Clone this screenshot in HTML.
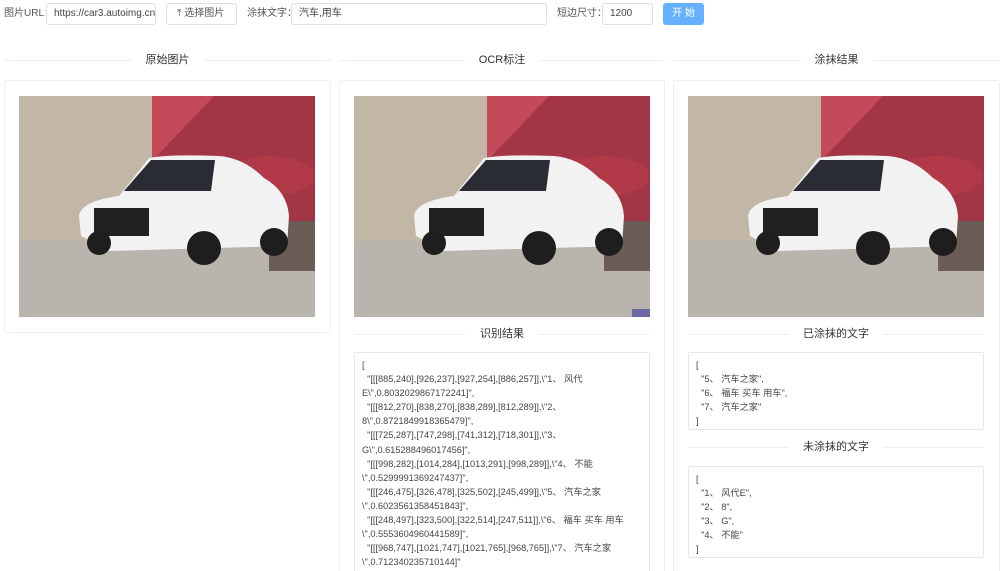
<!DOCTYPE html>
<html><head><meta charset="utf-8"><style>
*{box-sizing:border-box;margin:0;padding:0}
html,body{width:1000px;height:571px;overflow:hidden}
body{background:#fff;font-family:"Liberation Sans","Noto Sans CJK SC",sans-serif;color:#333;font-size:10px;position:relative}
.a{position:absolute}
.inp{position:absolute;border:1px solid #dcdfe6;border-radius:3px;height:22px;top:3px;line-height:20px;padding-left:7px;font-size:10px;color:#444;background:#fff}
.lbl{position:absolute;top:3px;line-height:22px;font-size:10px;color:#555}
.div{position:absolute;height:14px;}
.div:before{content:"";position:absolute;left:0;right:0;top:7px;border-top:1px solid #ebeef5}
.div span{position:absolute;left:50%;transform:translateX(-50%);background:#fff;padding:0 14px;font-size:11px;color:#333;line-height:14px;white-space:nowrap}
.card{position:absolute;border:1px solid #ebeef5;border-radius:3px;background:#fff}
.box{position:absolute;border:1px solid #e4e7ed;border-radius:2px;padding:5px 7px;font-size:9.2px;line-height:14.1px;color:#444;white-space:pre;overflow:hidden}
.img{position:absolute;width:296px;height:221px}
</style></head><body>
<div class="lbl" style="left:4px">图片URL：</div>
<div class="inp" style="left:46px;width:110px">https://car3.autoimg.cn</div>
<div class="inp" style="left:166px;width:71px;padding-left:10px;color:#555">⤒ 选择图片</div>
<div class="lbl" style="left:247px">涂抹文字：</div>
<div class="inp" style="left:291px;width:256px">汽车,用车</div>
<div class="lbl" style="left:557px">短边尺寸：</div>
<div class="inp" style="left:602px;width:51px">1200</div>
<div class="a" style="left:663px;top:3px;width:41px;height:22px;background:#66b1ff;border-radius:3px;color:#fff;text-align:center;line-height:22px;font-size:10px">开 始</div>

<div class="div" style="left:4px;top:53px;width:327px"><span>原始图片</span></div>
<div class="div" style="left:339px;top:53px;width:326px"><span>OCR标注</span></div>
<div class="div" style="left:673px;top:53px;width:327px"><span>涂抹结果</span></div>

<div class="card" style="left:4px;top:80px;width:327px;height:253px"></div>
<div class="card" style="left:339px;top:80px;width:326px;height:500px"></div>
<div class="card" style="left:673px;top:80px;width:327px;height:500px"></div>

<svg class="img" style="left:19px;top:96px" viewBox="0 0 296 221"><rect width="296" height="221" fill="#b9b5ae"/><rect width="133" height="145" fill="#c2b6a6"/><polygon points="133,0 296,0 296,125 133,125" fill="#a33646"/><polygon points="133,0 195,0 133,65" fill="#c44a5a"/><rect x="250" y="125" width="46" height="50" fill="#6b5c56"/><ellipse cx="250" cy="80" rx="45" ry="20" fill="#b23a48"/><path d="M62 140 L60 120 Q62 105 100 100 L130 62 Q150 58 200 60 Q225 62 245 82 Q268 95 270 120 L268 150 L90 155 Z" fill="#f2f2f2"/><polygon points="105,95 132,64 196,64 192,95" fill="#2a2c33"/><rect x="75" y="112" width="55" height="28" fill="#222"/><circle cx="185" cy="152" r="17" fill="#1e1e1e"/><circle cx="255" cy="146" r="14" fill="#1e1e1e"/><circle cx="80" cy="147" r="12" fill="#1e1e1e"/></svg>
<svg class="img" style="left:354px;top:96px" viewBox="0 0 296 221"><rect width="296" height="221" fill="#b9b5ae"/><rect width="133" height="145" fill="#c2b6a6"/><polygon points="133,0 296,0 296,125 133,125" fill="#a33646"/><polygon points="133,0 195,0 133,65" fill="#c44a5a"/><rect x="250" y="125" width="46" height="50" fill="#6b5c56"/><ellipse cx="250" cy="80" rx="45" ry="20" fill="#b23a48"/><path d="M62 140 L60 120 Q62 105 100 100 L130 62 Q150 58 200 60 Q225 62 245 82 Q268 95 270 120 L268 150 L90 155 Z" fill="#f2f2f2"/><polygon points="105,95 132,64 196,64 192,95" fill="#2a2c33"/><rect x="75" y="112" width="55" height="28" fill="#222"/><circle cx="185" cy="152" r="17" fill="#1e1e1e"/><circle cx="255" cy="146" r="14" fill="#1e1e1e"/><circle cx="80" cy="147" r="12" fill="#1e1e1e"/><rect x="278" y="213" width="18" height="8" fill="#6a6aa0"/></svg>
<svg class="img" style="left:688px;top:96px" viewBox="0 0 296 221"><rect width="296" height="221" fill="#b9b5ae"/><rect width="133" height="145" fill="#c2b6a6"/><polygon points="133,0 296,0 296,125 133,125" fill="#a33646"/><polygon points="133,0 195,0 133,65" fill="#c44a5a"/><rect x="250" y="125" width="46" height="50" fill="#6b5c56"/><ellipse cx="250" cy="80" rx="45" ry="20" fill="#b23a48"/><path d="M62 140 L60 120 Q62 105 100 100 L130 62 Q150 58 200 60 Q225 62 245 82 Q268 95 270 120 L268 150 L90 155 Z" fill="#f2f2f2"/><polygon points="105,95 132,64 196,64 192,95" fill="#2a2c33"/><rect x="75" y="112" width="55" height="28" fill="#222"/><circle cx="185" cy="152" r="17" fill="#1e1e1e"/><circle cx="255" cy="146" r="14" fill="#1e1e1e"/><circle cx="80" cy="147" r="12" fill="#1e1e1e"/></svg>

<div class="div" style="left:354px;top:327px;width:296px"><span>识别结果</span></div>
<div class="box" style="left:354px;top:352px;width:296px;height:230px">[
  "[[[885,240],[926,237],[927,254],[886,257]],\"1、 风代
E\",0.8032029867172241]",
  "[[[812,270],[838,270],[838,289],[812,289]],\"2、
8\",0.8721849918365479]",
  "[[[725,287],[747,298],[741,312],[718,301]],\"3、
G\",0.615288496017456]",
  "[[[998,282],[1014,284],[1013,291],[998,289]],\"4、 不能
\",0.5299991369247437]",
  "[[[246,475],[326,478],[325,502],[245,499]],\"5、 汽车之家
\",0.6023561358451843]",
  "[[[248,497],[323,500],[322,514],[247,511]],\"6、 福车 买车 用车
\",0.5553604960441589]",
  "[[[968,747],[1021,747],[1021,765],[968,765]],\"7、 汽车之家
\",0.712340235710144]"</div>

<div class="div" style="left:688px;top:327px;width:296px"><span>已涂抹的文字</span></div>
<div class="box" style="left:688px;top:352px;width:296px;height:78px">[
  "5、 汽车之家",
  "6、 福车 买车 用车",
  "7、 汽车之家"
]</div>
<div class="div" style="left:688px;top:440px;width:296px"><span>未涂抹的文字</span></div>
<div class="box" style="left:688px;top:466px;width:296px;height:92px">[
  "1、 风代E",
  "2、 8",
  "3、 G",
  "4、 不能"
]</div>
</body></html>
